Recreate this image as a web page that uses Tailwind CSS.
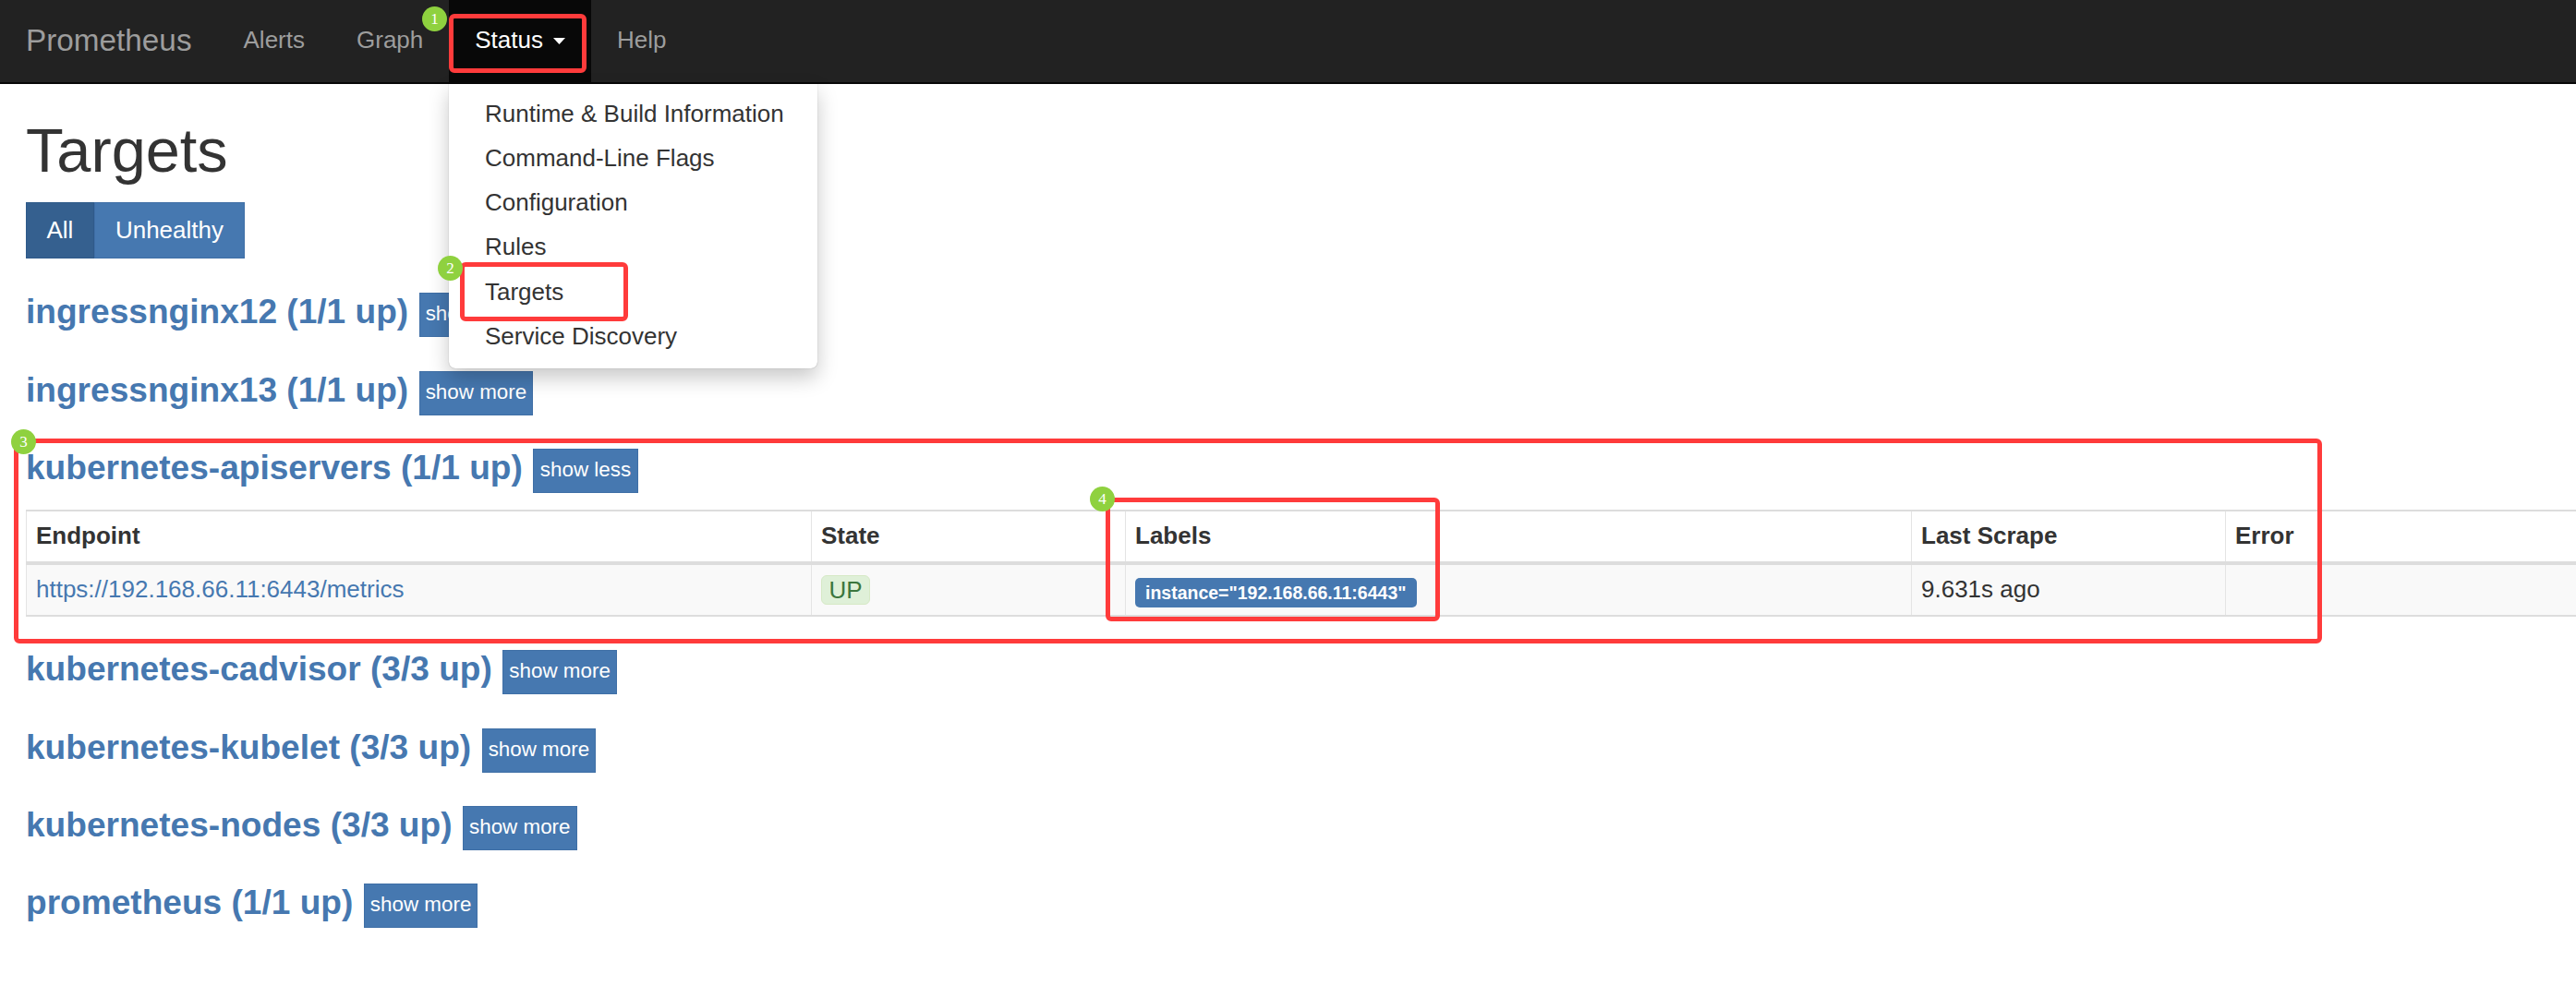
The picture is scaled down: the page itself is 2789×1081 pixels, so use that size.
<!DOCTYPE html>
<html lang="en">
<head>
  <meta charset="UTF-8">
  <script src="https://cdn.jsdelivr.net/npm/@tailwindcss/browser@4"></script>
  <title>Prometheus Time Series Collection and Processing Server</title>
</head>
<body class="relative h-[1081px] overflow-hidden bg-white font-['Liberation_Sans',Arial,sans-serif] text-[26px] text-[#333]">

  <!-- Navbar -->
  <nav class="flex h-[91px] items-stretch border-b-2 border-[#080808] bg-[#222] pl-[28px] text-[#9d9d9d]">
    <a href="#" class="mr-[28px] flex items-center pb-[2px] text-[33.3px]">Prometheus</a>
    <a href="#" class="flex items-center px-[28px] pb-[2px]">Alerts</a>
    <a href="#" class="flex items-center px-[28px] pb-[2px]">Graph</a>
    <a href="#" class="flex items-center gap-[11px] bg-[#080808] px-[28px] pb-[2px] text-white">
      Status
      <svg width="13" height="7" viewBox="0 0 13 7" class="mt-[2px]"><path d="M0 0h13L6.5 7z" fill="#fff"/></svg>
    </a>
    <a href="#" class="flex items-center px-[28px] pb-[2px]">Help</a>
  </nav>

  <!-- Status dropdown -->
  <ul class="absolute top-[91px] left-[486px] z-10 h-[308px] w-[399px] rounded-b-[7px] bg-white pt-[8px] pl-[39px] text-[#333] shadow-[0_10px_22px_rgba(0,0,0,0.22),0_0_1px_rgba(0,0,0,0.4)]">
    <li class="flex h-[48px] items-center">Runtime &amp; Build Information</li>
    <li class="flex h-[48px] items-center">Command-Line Flags</li>
    <li class="flex h-[48px] items-center">Configuration</li>
    <li class="flex h-[48px] items-center">Rules</li>
    <li class="mt-[1px] flex h-[48px] items-center">Targets</li>
    <li class="flex h-[48px] items-center">Service Discovery</li>
  </ul>

  <main class="pt-[37px] pl-[28px]">
    <h1 class="text-[66.7px] leading-[70px] font-normal">Targets</h1>

    <div class="mt-[21px] flex h-[61px] w-fit text-white">
      <button class="border border-[#2f5a8a] bg-[#35608f] px-[21.5px]">All</button>
      <button class="border border-[#3f6fa6] bg-[#4678b0] px-[22px]">Unhealthy</button>
    </div>

    <section class="mt-[37px] flex h-[48px] items-center gap-[11.5px]">
      <h2 class="-mt-[7px] text-[37.1px] font-bold text-[#4678b0]">ingressnginx12 (1/1 up)</h2>
      <button class="h-[48px] border border-[#3f6fa6] bg-[#4678b0] px-[6px] pb-[3px] text-[22.4px] text-white">show more</button>
    </section>

    <section class="mt-[37px] flex h-[48px] items-center gap-[11.5px]">
      <h2 class="-mt-[7px] text-[37.1px] font-bold text-[#4678b0]">ingressnginx13 (1/1 up)</h2>
      <button class="h-[48px] border border-[#3f6fa6] bg-[#4678b0] px-[6px] pb-[3px] text-[22.4px] text-white">show more</button>
    </section>

    <section class="mt-[36px]">
      <div class="flex h-[48px] items-center gap-[11.5px]">
        <h2 class="-mt-[7px] text-[37.1px] font-bold text-[#4678b0]">kubernetes-apiservers (1/1 up)</h2>
        <button class="h-[48px] border border-[#3f6fa6] bg-[#4678b0] px-[6.5px] pb-[3px] text-[22.4px] text-white">show less</button>
      </div>
      <table class="mt-[18px] w-[2761px] table-fixed border-collapse">
        <colgroup>
          <col class="w-[850px]"><col class="w-[340px]"><col class="w-[851px]"><col class="w-[340px]"><col class="w-[380px]">
        </colgroup>
        <thead>
          <tr class="h-[57px] border-t-2 border-b-[4px] border-[#ddd] text-left">
            <th class="border-x border-[#e4e4e4] pb-[2px] pl-[10px] font-bold">Endpoint</th>
            <th class="border-x border-[#e4e4e4] pb-[2px] pl-[10px] font-bold">State</th>
            <th class="border-x border-[#e4e4e4] pb-[2px] pl-[10px] font-bold">Labels</th>
            <th class="border-x border-[#e4e4e4] pb-[2px] pl-[10px] font-bold">Last Scrape</th>
            <th class="border-x border-[#e4e4e4] pb-[2px] pl-[10px] font-bold">Error</th>
          </tr>
        </thead>
        <tbody>
          <tr class="h-[57px] border-b-2 border-[#ddd] bg-[#f9f9f9]">
            <td class="border-x border-[#e4e4e4] pb-[1px] pl-[10px] text-[#4678b0]">https://192.168.66.11:6443/metrics</td>
            <td class="border-x border-[#e4e4e4] pl-[10px]">
              <span class="inline-block h-[32px] rounded-[6px] border border-[#d6e9c6] bg-[#dff0d8] px-[7.5px] leading-[30px] text-[#3c763d]">UP</span>
            </td>
            <td class="border-x border-[#e4e4e4] pl-[10px]">
              <span class="inline-block h-[32px] translate-y-[1px] rounded-[5px] bg-[#4678b0] px-[11px] text-[19.5px] leading-[32px] font-bold text-white">instance="192.168.66.11:6443"</span>
            </td>
            <td class="border-x border-[#e4e4e4] pb-[1px] pl-[10px]">9.631s ago</td>
            <td class="border-x border-[#e4e4e4] pl-[10px]"></td>
          </tr>
        </tbody>
      </table>
    </section>

    <section class="mt-[36px] flex h-[48px] items-center gap-[11.5px]">
      <h2 class="-mt-[7px] text-[37.1px] font-bold text-[#4678b0]">kubernetes-cadvisor (3/3 up)</h2>
      <button class="h-[48px] border border-[#3f6fa6] bg-[#4678b0] px-[6px] pb-[3px] text-[22.4px] text-white">show more</button>
    </section>

    <section class="mt-[37px] flex h-[48px] items-center gap-[11.5px]">
      <h2 class="-mt-[7px] text-[37.1px] font-bold text-[#4678b0]">kubernetes-kubelet (3/3 up)</h2>
      <button class="h-[48px] border border-[#3f6fa6] bg-[#4678b0] px-[6px] pb-[3px] text-[22.4px] text-white">show more</button>
    </section>

    <section class="mt-[36px] flex h-[48px] items-center gap-[11.5px]">
      <h2 class="-mt-[7px] text-[37.1px] font-bold text-[#4678b0]">kubernetes-nodes (3/3 up)</h2>
      <button class="h-[48px] border border-[#3f6fa6] bg-[#4678b0] px-[6px] pb-[3px] text-[22.4px] text-white">show more</button>
    </section>

    <section class="mt-[36px] flex h-[48px] items-center gap-[11.5px]">
      <h2 class="-mt-[7px] text-[37.1px] font-bold text-[#4678b0]">prometheus (1/1 up)</h2>
      <button class="h-[48px] border border-[#3f6fa6] bg-[#4678b0] px-[6px] pb-[3px] text-[22.4px] text-white">show more</button>
    </section>
  </main>

  <!-- Annotations drawn over the screenshot -->
  <div class="absolute top-[15px] left-[486px] z-20 h-[64px] w-[149px] rounded-[6px] border-[5px] border-[#ff3b3b]"></div>
  <div class="absolute top-[284px] left-[498px] z-20 h-[64px] w-[182px] rounded-[6px] border-[5px] border-[#ff3b3b]"></div>
  <div class="absolute top-[475px] left-[15px] z-20 h-[222px] w-[2499px] rounded-[6px] border-[5px] border-[#ff3b3b]"></div>
  <div class="absolute top-[539px] left-[1197px] z-20 h-[134px] w-[362px] rounded-[6px] border-[5px] border-[#ff3b3b]"></div>

  <span class="absolute top-[7px] left-[457px] z-30 flex size-[27px] items-center justify-center rounded-full bg-[#8fd13f] font-['Liberation_Serif',serif] text-[17px] text-white">1</span>
  <span class="absolute top-[277px] left-[474px] z-30 flex size-[27px] items-center justify-center rounded-full bg-[#8fd13f] font-['Liberation_Serif',serif] text-[17px] text-white">2</span>
  <span class="absolute top-[465px] left-[12px] z-30 flex size-[27px] items-center justify-center rounded-full bg-[#8fd13f] font-['Liberation_Serif',serif] text-[17px] text-white">3</span>
  <span class="absolute top-[527px] left-[1180px] z-30 flex size-[27px] items-center justify-center rounded-full bg-[#8fd13f] font-['Liberation_Serif',serif] text-[17px] text-white">4</span>
</body>
</html>
